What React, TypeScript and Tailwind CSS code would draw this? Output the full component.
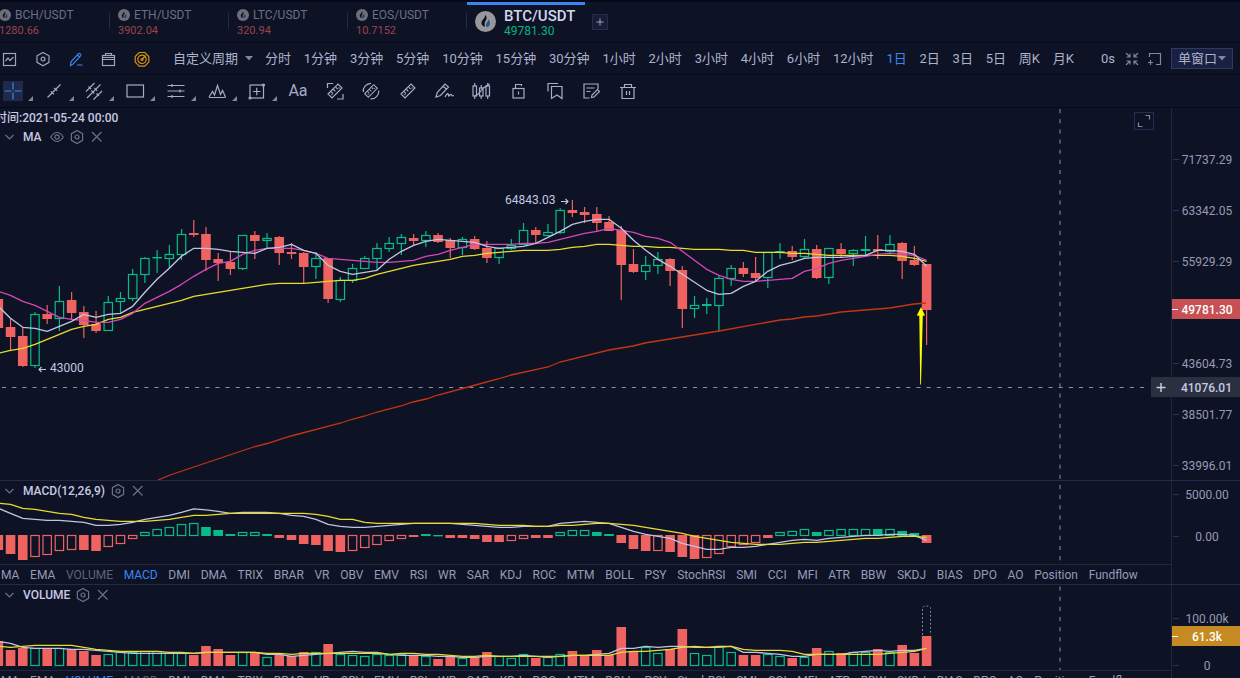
import React from "react";

type Candle = [kind: "u" | "d", high: number, top: number, bottom: number, low: number];

const STEP = 12.214;
const LAST_X = 926.6;
const LAST_INDEX = 76;
const BODY = 9.6;
const xAt = (i: number) => LAST_X - STEP * (LAST_INDEX - i);
const left = (i: number) => xAt(i) - BODY / 2;

const GREEN = "#04bd88";
const RED = "#ee6260";
const WHITE = "#bfc4e0";
const YELLOW = "#e8dc2c";
const PINK = "#d447b6";
const ORANGE = "#c43512";

const candles: Candle[] = [
  ["d", 299, 299, 328, 328], ["d", 319, 327, 337, 350], ["d", 327, 336, 366, 367], ["u", 312, 314, 366, 368],
  ["d", 305, 314, 319, 324], ["u", 286, 301, 319, 331], ["d", 292, 300, 313, 319], ["d", 306, 312, 325, 338],
  ["d", 311, 324, 331, 333], ["u", 296, 302, 331, 331], ["u", 292, 298, 302, 313], ["u", 269, 274, 299, 301],
  ["u", 257, 258, 275, 283], ["u", 250, 257, 258, 273], ["u", 245, 254, 259, 268], ["u", 229, 234, 255, 260],
  ["d", 220, 233, 235, 237], ["d", 227, 234, 260, 271], ["d", 253, 259, 263, 281], ["d", 251, 262, 269, 275],
  ["u", 235, 235, 269, 270], ["d", 231, 235, 241, 259], ["u", 233, 238, 241, 248], ["d", 236, 237, 253, 265],
  ["d", 243, 252, 254, 259], ["d", 252, 253, 267, 283], ["u", 252, 258, 267, 279], ["d", 258, 258, 299, 303],
  ["u", 277, 280, 300, 302], ["u", 264, 268, 281, 283], ["u", 256, 258, 269, 269], ["u", 243, 248, 259, 270],
  ["u", 237, 243, 249, 252], ["u", 234, 237, 244, 255], ["d", 234, 238, 241, 245], ["u", 231, 235, 241, 247],
  ["d", 233, 235, 242, 243], ["d", 238, 240, 248, 258], ["u", 237, 239, 248, 255], ["d", 236, 239, 249, 250],
  ["d", 241, 248, 258, 263], ["u", 247, 248, 258, 264], ["u", 239, 245, 249, 250], ["u", 223, 230, 245, 245],
  ["d", 227, 230, 235, 243], ["u", 224, 232, 236, 236], ["u", 208, 210, 233, 234], ["d", 200, 210, 213, 217],
  ["d", 207, 212, 215, 223], ["d", 207, 214, 223, 232], ["d", 216, 222, 231, 231], ["d", 226, 230, 265, 300],
  ["d", 249, 264, 272, 273], ["u", 256, 265, 272, 280], ["u", 252, 259, 266, 274], ["d", 258, 259, 271, 286],
  ["d", 266, 270, 309, 328], ["u", 296, 305, 309, 318], ["u", 298, 304, 306, 314], ["u", 275, 278, 306, 332],
  ["u", 265, 268, 279, 286], ["d", 262, 268, 274, 277], ["d", 257, 273, 278, 281], ["u", 252, 252, 278, 288],
  ["u", 243, 251, 252, 259], ["d", 246, 251, 257, 260], ["u", 239, 249, 257, 258], ["d", 245, 249, 278, 279],
  ["u", 248, 248, 278, 284], ["d", 243, 249, 254, 257], ["u", 249, 250, 254, 266], ["u", 236, 249, 251, 256],
  ["d", 235, 249, 251, 259], ["u", 235, 244, 252, 254], ["d", 242, 243, 261, 279], ["d", 246, 260, 265, 266],
  ["d", 264, 264, 310, 345],
];

const ma5 = [306, 318, 327, 328, 331, 326, 321, 314, 317, 314, 313, 306, 292, 279, 268, 256, 248, 248, 249, 251, 252, 253, 248, 247, 244, 250, 253, 265, 271, 274, 272, 270, 259, 251, 245, 241, 239, 240, 241, 242, 246, 248, 247, 246, 243, 237, 231, 224, 221, 219, 219, 228, 240, 250, 259, 266, 274, 282, 290, 294, 293, 286, 281, 271, 265, 262, 258, 257, 257, 257, 256, 255, 250, 250, 251, 254, 266];
const ma10 = [291, 295, 301, 305, 311, 317, 319, 320, 322, 322, 319, 313, 303, 297, 291, 284, 276, 269, 263, 261, 254, 250, 248, 248, 248, 250, 253, 258, 259, 260, 261, 262, 262, 261, 260, 256, 254, 250, 247, 244, 244, 244, 244, 243, 243, 242, 239, 236, 233, 231, 228, 230, 232, 236, 238, 242, 251, 260, 269, 275, 279, 281, 281, 280, 279, 278, 271, 268, 263, 260, 258, 256, 254, 253, 254, 255, 260];
const ma30 = [353, 350, 348, 344, 339, 334, 329, 326, 324, 319, 317, 312, 309, 306, 303, 300, 296, 294, 292, 290, 288, 286, 284, 283, 283, 283, 282, 281, 280, 280, 278, 274, 271, 268, 265, 263, 261, 259, 256, 255, 253, 252, 251, 250, 250, 250, 249, 247, 246, 244, 244, 245, 246, 246, 247, 247, 248, 249, 249, 249, 250, 250, 252, 252, 252, 253, 253, 254, 255, 255, 255, 255, 255, 255, 256, 258, 261];

const longAverage = "158,480 170,475 255,446.5 267,443.5 291,436 341,423 353,419 365,416 377,412 401,406 413,402 426,399 438,395 470,386.5 498,379 511,375 548,367 560,362 609,350 633,346 645,343 682,337 719,331 780,320 792,319 804,317 817,316 841,312 865,310 890,308 914,304 926,303";

// [kind, hollow, value edge]
type MacdBar = ["u" | "d", 0 | 1, number];
const macdBars: MacdBar[] = [
  ["d", 0, 550], ["d", 0, 554], ["d", 0, 560], ["d", 1, 557], ["d", 1, 555], ["d", 1, 551], ["d", 1, 550], ["d", 0, 550],
  ["d", 0, 551], ["d", 1, 547], ["d", 1, 544], ["d", 1, 539], ["u", 1, 532], ["u", 1, 529], ["u", 1, 527], ["u", 1, 524],
  ["u", 1, 523], ["u", 0, 527], ["u", 0, 530], ["u", 0, 534], ["u", 1, 532], ["u", 1, 532], ["u", 0, 534], ["d", 0, 538],
  ["d", 0, 540], ["d", 0, 544], ["d", 0, 545], ["d", 0, 551], ["d", 0, 552], ["d", 1, 551], ["d", 1, 548], ["d", 1, 545],
  ["d", 1, 541], ["d", 1, 539], ["d", 0, 537], ["u", 0, 534], ["u", 0, 535], ["d", 0, 538], ["d", 0, 538], ["d", 0, 539],
  ["d", 0, 542], ["d", 0, 542], ["d", 1, 541], ["d", 1, 539], ["d", 0, 538], ["d", 0, 538], ["u", 1, 532], ["u", 1, 530],
  ["u", 1, 530], ["u", 0, 532], ["u", 0, 534], ["d", 0, 543], ["d", 0, 549], ["d", 0, 551], ["d", 1, 551], ["d", 0, 552],
  ["d", 0, 557], ["d", 0, 559], ["d", 1, 558], ["d", 1, 554], ["d", 1, 547], ["d", 1, 545], ["d", 1, 543], ["d", 0, 538],
  ["u", 1, 532], ["u", 1, 531], ["u", 1, 529], ["u", 0, 532], ["u", 1, 530], ["u", 1, 529], ["u", 1, 529], ["u", 1, 529],
  ["u", 0, 529], ["u", 1, 529], ["u", 0, 531], ["u", 0, 533], ["d", 0, 543],
];
const dif = [508, 513, 518, 519, 520, 520, 521, 522, 525, 525, 524, 522, 519, 517, 515, 512, 508.5, 509.5, 511, 513, 512, 512, 512, 513, 515, 516, 519, 524, 526, 527, 527, 526, 525, 524, 523, 523, 523, 523, 524, 525, 526, 527, 527, 526, 526, 526, 523, 522, 521, 522, 523, 527, 531, 534, 536, 538, 543, 546, 549, 549, 547, 547, 546, 544, 542, 540, 539, 540, 538, 537, 536, 535, 535, 534, 534, 535, 540];
const dea = [503, 504, 508, 509, 511, 513, 514, 517, 519, 520, 521, 521, 521, 520, 519, 517, 515, 515, 514, 513, 513, 513, 513, 513, 513, 513, 514, 516, 519, 519, 522, 523, 523, 523, 523, 523, 523, 523, 523, 523, 524, 525, 525, 525, 526, 526, 525, 525, 524, 523, 523, 524, 525, 527, 529, 531, 533, 536, 538, 540, 542, 543, 544, 544, 544, 543, 542, 542, 541, 540, 539, 538, 538, 537, 536, 536, 537];

const volumeTops = [641, 650, 648, 648, 649, 648, 649, 651, 655, 654, 652, 652, 651, 651, 653, 653, 655, 646, 649, 655, 652, 652, 657, 655, 656, 652, 652, 644, 654, 655, 656, 654, 655, 654, 655, 656, 659, 656, 658, 657, 652, 656, 658, 654, 658, 657, 654, 651, 655, 650, 655, 627, 651, 647, 653, 649, 629, 653, 655, 646, 652, 655, 655, 654, 656, 658, 657, 648, 651, 653, 652, 652, 649, 652, 645, 653, 636];
const volumeFast = [641, 643, 647, 648, 648, 648, 649, 649, 650, 651, 652, 653, 653, 653, 653, 653, 653, 652, 652, 652, 652, 652, 654, 654, 656, 655, 654, 653, 652, 651, 652, 652, 654, 655, 655, 655, 656, 656, 657, 657, 656, 656, 656, 655, 656, 657, 656, 655, 655, 654, 653, 648, 648, 646, 647, 646, 646, 647, 647, 647, 646, 652, 652, 653, 654, 656, 656, 654, 654, 654, 652, 651, 650, 651, 650, 650, 648];
const volumeSlow = [646, 647, 646, 645, 645, 645, 645, 647, 649, 650, 651, 651, 651, 651, 652, 652, 653, 652, 652, 652, 652, 652, 653, 653, 654, 653, 653, 653, 653, 653, 653, 653, 654, 653, 653, 654, 654, 655, 656, 656, 655, 656, 656, 656, 656, 656, 656, 655, 655, 655, 655, 652, 651, 651, 650, 649, 647, 646, 647, 646, 646, 649, 650, 650, 650, 651, 654, 654, 654, 654, 654, 654, 654, 653, 652, 651, 648];

const points = (ys: number[]) => ys.map((y, i) => `${xAt(i).toFixed(1)},${y + 0.3}`).join(" ");

function Line({ ys, color }: { ys: number[]; color: string }) {
  return <polyline points={points(ys)} fill="none" stroke={color} strokeWidth={1.35} strokeLinejoin="round" />;
}

function Bar({ i, top, bottom, color, hollow }: { i: number; top: number; bottom: number; color: string; hollow: boolean }) {
  const h = Math.max(bottom - top, 1.4);
  if (hollow && h > 2) {
    return <rect x={left(i) + 0.6} y={top + 0.5} width={BODY - 1.2} height={h - 1} fill="none" stroke={color} strokeWidth={1.2} />;
  }
  return <rect x={left(i)} y={top} width={BODY} height={h} fill={color} />;
}

/* ---------- icons ---------- */

function Icon({ children, className = "size-5", size = 20 }: { children: React.ReactNode; className?: string; size?: number }) {
  return (
    <svg viewBox={`0 0 ${size} ${size}`} className={className} fill="none" stroke="currentColor" strokeWidth={1.2} aria-hidden="true">
      {children}
    </svg>
  );
}

function Coin({ className }: { className: string }) {
  return (
    <svg viewBox="0 0 22 22" className={className} aria-hidden="true">
      <circle cx="11" cy="11" r="11" fill="#98979c" />
      <path d="M10.6 4c2.2 2.2 1.7 4.3.6 6-1.1 1.9-1.6 3.7-.6 6.6C8 16 6.6 14 6.8 12c.2-2 1.8-3 2.900-4.700C10.500 6 10.700 5 10.600 4z" fill="#0b0e1c" />
      <path d="M13.800 8.600c1.600 1.600 2.100 3.300 1.800 5-.3 1.900-1.600 3-3.500 3.300-.9-2.300-.4-3.700.6-5 .7-1 1.200-1.900 1.100-3.300z" fill="#2c4f96" />
    </svg>
  );
}

const Gear = ({ className = "size-5" }: { className?: string }) => (
  <Icon className={className}>
    <path d="M10 3.500l5.600 3.200v6.600L10 16.500l-5.600-3.200V6.700z" />
    <circle cx="10" cy="10" r="2" />
  </Icon>
);
const Chevron = () => (
  <Icon className="size-5">
    <path d="M5.500 8l4 4 4-4" />
  </Icon>
);
const Close = () => (
  <Icon className="size-5">
    <path d="M5 5l9.500 9.500M14.500 5L5 14.500" />
  </Icon>
);
const Eye = () => (
  <Icon className="size-5">
    <path d="M3.800 10c1.800-3 3.900-4.500 6.200-4.500s4.400 1.500 6.200 4.500c-1.800 3-3.900 4.500-6.200 4.500S5.600 13 3.800 10z" />
    <circle cx="10" cy="10" r="2.200" />
  </Icon>
);

const viewIcons: { name: string; color: string; body: React.ReactNode }[] = [
  { name: "图表", color: "text-[#9ea3bf]", body: <><rect x="3.500" y="4.500" width="12" height="12" /><path d="M5.500 12l2.500-3 2 2.500 3.500-3.500" /></> },
  { name: "设置", color: "text-[#9ea3bf]", body: <><path d="M10 3.500l6 3.300v6.600l-6 3.300-6-3.300V6.800z" /><circle cx="10" cy="10.100" r="1.900" /></> },
  { name: "画线", color: "text-[#3a86f0]", body: <path d="M4.500 16.500l.5-3.700 7.500-8.200c.8-.8 2.900 1 2.200 2l-7.500 8.300zM11.300 6l2.200 2M11 16h5.500" /> },
  { name: "工具", color: "text-[#9ea3bf]", body: <><rect x="3.500" y="6.500" width="12" height="10" /><path d="M6.500 6.500v-2h6v2M3.500 10.500h12M3.500 8.500h12" /></> },
  { name: "指标", color: "text-[#d9920c]", body: <><path d="M7.200 3.500h5.600l4 4v5.600l-4 4H7.200l-4-4V7.500z" /><circle cx="10" cy="10.300" r="4.200" /><circle cx="10" cy="10.500" r="1" /><path d="M10.500 10l3-3.500" /></> },
];

const menuTools: { name: string; body: React.ReactNode }[] = [
  { name: "十字线", body: <path d="M10 1.500v7M10 11.500v7M1.500 10h7M11.500 10h7" /> },
  { name: "线段", body: <path d="M3.500 16.500l13-13M6.900 10.300l3 3M10.100 6.900l3 3" /> },
  { name: "平行线", body: <path d="M2 10.500l8.500-8.500M9.500 18.500l8.500-8.500M3 17L16.500 3.500M4.500 5.500l2.500 2.500M7.300 9.500l3 3M10.300 6.800l3 3M12.500 12.500l2.500 2.500" strokeWidth={1.1} /> },
  { name: "矩形", body: <rect x="2" y="4" width="16.500" height="12" /> },
  { name: "水平线", body: <><path d="M1.500 4.500h17M1.500 10h17M1.500 15.500h17" /><path d="M6 3v3M14 8.500v3M6 14v3" /></> },
  { name: "形态", body: <path d="M2 16l3.500-5.500L7.500 14l3-9.500 3 9L15.500 9.500 18.500 16M2 16.500h16.500" /> },
  { name: "形状", body: <><rect x="3" y="4" width="13.500" height="13" /><path d="M6 10.500h7.500M9.750 6.800v7.500" /><circle cx="16.500" cy="4" r="1" /><circle cx="3" cy="17" r="1" /></> },
];

const rulerBody = <path d="M3 13L13 3l4 4L7 17zM8 12.500l-1.700-1.700M10.300 10.300L8.500 8.500M12.500 8L11 6.300M13.700 7.500l.8-.8M6.500 14l.8-.8" strokeWidth={1.15} />;

const plainTools: { name: string; body: React.ReactNode }[] = [
  { name: "测量", body: <>{rulerBody}<path d="M2.500 7V2.500H8M12 18h6v-5" /></> },
  { name: "区间", body: <><g transform="translate(1 1) scale(.9)">{rulerBody}</g><path d="M2.300 11A7.900 7.900 0 0 1 10 2.300M17.800 9.500A7.900 7.900 0 0 1 9.500 17.900" /></> },
  { name: "尺子", body: rulerBody },
  { name: "画笔", body: <path d="M1 16l1.200-4.500L10 3l3.500 3-8 8.500zM8 5.200L11.700 8.300M10 16c2-4 3.500-4.500 3.500-1.500 0 2 1.500-1.500 2.700-1 .9.500.3 2 2.800 1" /> },
  { name: "K线", body: <><rect x="2" y="5" width="3.500" height="10" /><rect x="8.500" y="7" width="3.500" height="8" /><rect x="15" y="5" width="3.500" height="10" /><path d="M3.700 2v3M3.700 15v3M10.200 4v3M10.200 15v3M16.700 2v3M16.700 15v3M3.500 15c4-1 5-3 7-6 1.500-2.500 4-3 8-6" /></> },
  { name: "锁定", body: <><rect x="5" y="7.500" width="11" height="9.500" /><path d="M7.500 7.500v-4h6v1.500M10.500 10.500v3" /></> },
  { name: "收藏", body: <><path d="M6.500 5.500H17v12l-5-3.500-5.500 3.500z" /><path d="M3 10.500v-8h10" /></> },
  { name: "备注", body: <><path d="M17 8V3H3v14h5.500M5.500 7h8M5.500 10.500h4" /><path d="M10.500 16.500l.5-2.500 5.500-5.500 2 2-5.500 5.500z" /></> },
  { name: "删除", body: <path d="M2 6.500h16M4 6.500v11h12v-11M6.500 6.500v-3h7v3M8.500 10v4M11.500 10v4" /> },
];

/* ---------- header ---------- */

const tabs = [
  ["BCH/USDT", "1280.66"],
  ["ETH/USDT", "3902.04"],
  ["LTC/USDT", "320.94"],
  ["EOS/USDT", "10.7152"],
];

function MarketTabs() {
  return (
    <nav className="flex h-[43px] shrink-0 items-start border-t-2 border-b border-[#05081a] border-b-[#060919]">
      <div className="-ml-[9px] flex shrink-0">
        {tabs.map(([pair, price]) => (
          <div key={pair} className="flex w-[119px] items-center">
            <button className="flex-1 pt-[5px] pl-2 text-left">
              <span className="flex items-center gap-1 text-xs leading-4 text-[#6b6f85]">
                <Coin className="size-3 opacity-70" />
                {pair}
              </span>
              <span className="block text-[11px] leading-4 text-[#9c434d]">{price}</span>
            </button>
            <span className="h-4 w-px bg-[#232a47]" />
          </div>
        ))}
      </div>
      <button className="flex w-[118px] shrink-0 items-center gap-2 border-t-3 border-[#3a86f0] pl-2 text-left">
        <Coin className="size-[21px]" />
        <span className="pt-[3px]">
          <span className="block text-[15px] leading-4 font-medium text-[#d3d6ee]">BTC/USDT</span>
          <span className="block text-xs leading-[14px] text-[#0bb183]">49781.30</span>
        </span>
      </button>
      <button aria-label="添加" className="mt-3 ml-[7px] flex size-4 items-center justify-center border border-[#252d4c] bg-[#161c36] text-[#9ea3bf]">
        <Icon className="size-4" size={16}>
          <path d="M4 8h8M8 4v8" />
        </Icon>
      </button>
    </nav>
  );
}

const periods = ["分时", "1分钟", "3分钟", "5分钟", "10分钟", "15分钟", "30分钟", "1小时", "2小时", "3小时", "4小时", "6小时", "12小时", "1日", "2日", "3日", "5日", "周K", "月K"];

function Caret({ className }: { className: string }) {
  return (
    <svg viewBox="0 0 8 5" className={className} aria-hidden="true">
      <path d="M0 0h8L4 4.500z" fill="#7f86a3" />
    </svg>
  );
}

function PeriodBar() {
  return (
    <div className="flex h-8 shrink-0 items-center border-b border-[#060919] pr-[7px] text-[13px] whitespace-nowrap text-[#adb2ce]">
      <div className="flex shrink-0 gap-[13px]">
        {viewIcons.map((icon) => (
          <button key={icon.name} aria-label={icon.name} className={icon.color}>
            <Icon>{icon.body}</Icon>
          </button>
        ))}
      </div>
      <label className="ml-5 flex shrink-0 items-center gap-[5px]">
        <select aria-label="周期" className="w-[68px] appearance-none bg-transparent pl-px outline-none">
          <option>自定义周期</option>
        </select>
        <Caret className="pointer-events-none h-[5px] w-2" />
      </label>
      <div className="ml-3 flex w-[809px] shrink-0 justify-between">
        {periods.map((p) => (
          <button key={p} className={p === "1日" ? "text-[#3a86f0]" : ""}>
            {p}
          </button>
        ))}
      </div>
      <div className="ml-auto flex shrink-0 items-center">
        <span>0s</span>
        <button aria-label="收起" className="ml-[9px] text-[#8086a3]">
          <Icon className="size-4" size={16}>
            <path d="M2 2l4 4M6 2.500V6H2.500M14 2l-4 4M10 2.500V6h3.500M2 14l4-4M6 13.500V10H2.500M14 14l-4-4M10 13.500V10h3.500" strokeWidth={1.1} />
          </Icon>
        </button>
        <button aria-label="新建窗口" className="ml-[7px] text-[#8086a3]">
          <Icon className="size-4" size={16}>
            <path d="M2.500 6V2.500h11v11H9M1 11.500h5M3.500 9v5" />
          </Icon>
        </button>
        <label className="ml-2 flex h-[21px] items-center border border-[#2e3966] bg-[#1a2140] px-[6px]">
          <select aria-label="窗口布局" className="w-10 appearance-none bg-transparent outline-none">
            <option>单窗口</option>
          </select>
          <Caret className="pointer-events-none h-[5px] w-2" />
        </label>
      </div>
    </div>
  );
}

function DrawBar() {
  return (
    <div className="flex h-[33px] shrink-0 items-center border-b border-[#060919] pl-[3px] text-[#a7acc8]">
      <div className="flex w-[285px] shrink-0">
        {menuTools.map((tool, i) => (
          <button key={tool.name} aria-label={tool.name} className="flex flex-1 items-end gap-[5px]">
            <span className={i === 0 ? "bg-[#1f2a4b] text-[#3a86f0]" : ""}>
              <Icon>{tool.body}</Icon>
            </span>
            <svg viewBox="0 0 5 5" className="size-[5px]" aria-hidden="true">
              <path d="M5 0v5H0z" fill="#8086a3" />
            </svg>
          </button>
        ))}
      </div>
      <div className="flex w-[350px] shrink-0 items-center justify-between">
        <button aria-label="文字" className="w-5 text-base leading-5">
          Aa
        </button>
        {plainTools.map((tool) => (
          <button key={tool.name} aria-label={tool.name}>
            <Icon>{tool.body}</Icon>
          </button>
        ))}
      </div>
    </div>
  );
}

/* ---------- panels ---------- */

function PanelTitle({ children, eye = false }: { children: string; eye?: boolean }) {
  return (
    <div className="flex h-[19px] items-center text-xs font-medium text-[#c6cae4]">
      <button aria-label="折叠" className="w-[23px] text-[#6b7089]">
        <Chevron />
      </button>
      {children}
      <span className={eye ? "ml-[5px] flex text-[#6b7089]" : "ml-[3px] flex text-[#6b7089]"}>
        {eye && (
          <button aria-label="显示">
            <Eye />
          </button>
        )}
        <button aria-label={`${children} 设置`}>
          <Gear />
        </button>
        <button aria-label={`关闭 ${children}`}>
          <Close />
        </button>
      </span>
    </div>
  );
}

const indicators = ["MA", "EMA", "VOLUME", "MACD", "DMI", "DMA", "TRIX", "BRAR", "VR", "OBV", "EMV", "RSI", "WR", "SAR", "KDJ", "ROC", "MTM", "BOLL", "PSY", "StochRSI", "SMI", "CCI", "MFI", "ATR", "BBW", "SKDJ", "BIAS", "DPO", "AO", "Position", "Fundflow"];

function IndicatorBar({ active, dimmed }: { active: string; dimmed: string }) {
  return (
    <div className="relative h-5 border-t border-[#20263f] bg-[#0e1225]">
      <div className="flex max-w-[1138px] items-center justify-between pl-px text-xs leading-5 whitespace-nowrap text-[#969bb6]">
        {indicators.map((name) => (
          <button key={name} className={name === active ? "text-[#3a86f0]" : name === dimmed ? "text-[#5f647d]" : ""}>
            {name}
          </button>
        ))}
      </div>
    </div>
  );
}

function AxisLabel({ y, children, tick = true }: { y: number; children: string; tick?: boolean }) {
  return (
    <g>
      {tick && <path d={`M1 ${y}.5h6`} stroke="#2b3352" />}
      <text x="35" y={y + 5} textAnchor="middle" fill="#969bb3" fontSize="12">
        {children}
      </text>
    </g>
  );
}

function PriceChart() {
  return (
    <svg className="block h-full w-full" role="img" aria-label="BTC/USDT K线图">
      <g transform="translate(0 -108)">
        {candles.map(([kind, high, top, bottom, low], i) => {
          const color = kind === "u" ? GREEN : RED;
          const cx = xAt(i);
          return (
            <g key={i}>
              {high < top && <path d={`M${cx} ${high}V${top}`} stroke={color} strokeWidth={1.2} />}
              {low > bottom && <path d={`M${cx} ${bottom}V${low}`} stroke={color} strokeWidth={1.2} />}
              <Bar i={i} top={top} bottom={bottom} color={color} hollow={kind === "u"} />
            </g>
          );
        })}
        <polyline points={longAverage} fill="none" stroke={ORANGE} strokeWidth={1.3} />
        <Line ys={ma30} color={YELLOW} />
        <Line ys={ma10} color={PINK} />
        <Line ys={ma5} color={WHITE} />
        <path d="M921 307l4 8.500-2.200.3L921 384.500h-.8L919.300 315.800l-2.500-.3z" fill="#ffff00" />
        <g fill="#c4c8e0" fontSize="12">
          <text x="505" y="204">64843.03</text>
          <text x="50" y="372">43000</text>
        </g>
        <g fill="none" stroke="#c4c8e0" strokeWidth={1.1}>
          <path d="M561 201.500h7M565.500 199l2.500 2.500-2.500 2.500" />
          <path d="M46 369.500h-7M41.500 367l-2.500 2.500 2.500 2.500" />
        </g>
      </g>
    </svg>
  );
}

function MacdChart() {
  return (
    <svg className="block h-full w-full" role="img" aria-label="MACD">
      <g transform="translate(0 -481)">
        {macdBars.map(([kind, hollow, edge], i) => (
          <Bar
            key={i}
            i={i}
            top={kind === "u" ? edge : 535}
            bottom={kind === "u" ? 536 : edge}
            color={kind === "u" ? GREEN : RED}
            hollow={hollow === 1}
          />
        ))}
        <Line ys={dif} color={WHITE} />
        <Line ys={dea} color={YELLOW} />
      </g>
    </svg>
  );
}

function VolumeChart() {
  return (
    <svg className="block h-full w-full" role="img" aria-label="成交量">
      <g transform="translate(0 -585)">
        {volumeTops.map((top, i) => (
          <Bar key={i} i={i} top={top} bottom={666} color={candles[i][0] === "u" ? GREEN : RED} hollow={candles[i][0] === "u"} />
        ))}
        <path d="M922.500 635V607.500l1.500-1.500h5l1.500 1.500V635" fill="none" stroke="#7d8299" strokeDasharray="2 2" />
        <Line ys={volumeFast} color={WHITE} />
        <Line ys={volumeSlow} color={YELLOW} />
      </g>
    </svg>
  );
}

function Crosshair() {
  return (
    <svg className="pointer-events-none absolute inset-0 h-full w-full" aria-hidden="true">
      <g stroke="#8a8fa8" strokeDasharray="4.160 6" strokeWidth={1}>
        <path d="M1060 1V562" />
        <path d="M2 279.500H1148" />
      </g>
    </svg>
  );
}

const axisClass = "w-[69px] shrink-0 border-l border-[#20263f]";

export default function App() {
  return (
    <div className="flex h-screen flex-col overflow-hidden bg-[#0e1225] font-['Roboto','Noto_Sans_CJK_SC',sans-serif]">
      <MarketTabs />
      <PeriodBar />
      <DrawBar />
      <main className="relative shrink-0">
        <Crosshair />
        <section className="flex h-[373px] border-b border-[#232b48]">
          <div className="relative min-w-0 flex-1">
            <PriceChart />
            <div className="absolute top-0 left-0">
              <p className="-ml-[5px] h-[19px] text-xs leading-[21px] font-medium text-[#c6cae4]">时间:2021-05-24 00:00</p>
              <PanelTitle eye>MA</PanelTitle>
            </div>
            <button aria-label="全屏" className="absolute top-1 right-[17px] border border-[#252e50] text-[#8086a3]">
              <Icon className="h-4 w-[18px]" size={16}>
                <path d="M9.500 2.500h4v4M2.500 9.500v4h4" />
              </Icon>
            </button>
          </div>
          <svg className={`${axisClass} h-full`} aria-label="价格">
            <AxisLabel y={51}>71737.29</AxisLabel>
            <AxisLabel y={102}>63342.05</AxisLabel>
            <AxisLabel y={153}>55929.29</AxisLabel>
            <AxisLabel y={255}>43604.73</AxisLabel>
            <AxisLabel y={306}>38501.77</AxisLabel>
            <AxisLabel y={357}>33996.01</AxisLabel>
            <rect y="191" width="69" height="20" fill="#c65053" />
            <path d="M0 201.500h6" stroke="#fff" />
            <text x="35" y="206" textAnchor="middle" fill="#fff" fontSize="12" fontWeight="500">
              49781.30
            </text>
          </svg>
          <div className="absolute top-[269px] right-0 flex h-5 w-[89px] items-center justify-between bg-[#2b3041] pr-2 text-xs leading-5 font-medium text-[#c6cae4]">
            <button aria-label="添加提醒">
              <Icon className="size-5">
                <path d="M5.500 10.500h9M10 6v9" strokeWidth={1.500} />
              </Icon>
            </button>
            <span className="pt-px">41076.01</span>
          </div>
        </section>
        <section className="flex h-[104px] border-b border-[#232b48]">
          <div className="min-w-0 flex-1">
            <div className="relative h-[83px]">
              <MacdChart />
              <div className="absolute top-0 left-0">
                <PanelTitle>MACD(12,26,9)</PanelTitle>
              </div>
            </div>
            <IndicatorBar active="MACD" dimmed="VOLUME" />
          </div>
          <svg className={`${axisClass} h-full`} aria-label="MACD 刻度">
            <AxisLabel y={13}>5000.00</AxisLabel>
            <AxisLabel y={55}>0.00</AxisLabel>
          </svg>
        </section>
        <section className="flex">
          <div className="min-w-0 flex-1">
            <div className="relative h-[85px]">
              <VolumeChart />
              <div className="absolute top-0 left-0">
                <PanelTitle>VOLUME</PanelTitle>
              </div>
            </div>
            <IndicatorBar active="VOLUME" dimmed="MACD" />
          </div>
          <svg className={`${axisClass} h-[105px]`} aria-label="成交量刻度">
            <AxisLabel y={33}>100.00k</AxisLabel>
            <rect y="41" width="69" height="20" fill="#c68a22" />
            <path d="M0 51.500h6" stroke="#fff" />
            <text x="35" y="56" textAnchor="middle" fill="#fff" fontSize="12" fontWeight="500">
              61.3k
            </text>
            <AxisLabel y={80}>0</AxisLabel>
          </svg>
        </section>
      </main>
    </div>
  );
}
